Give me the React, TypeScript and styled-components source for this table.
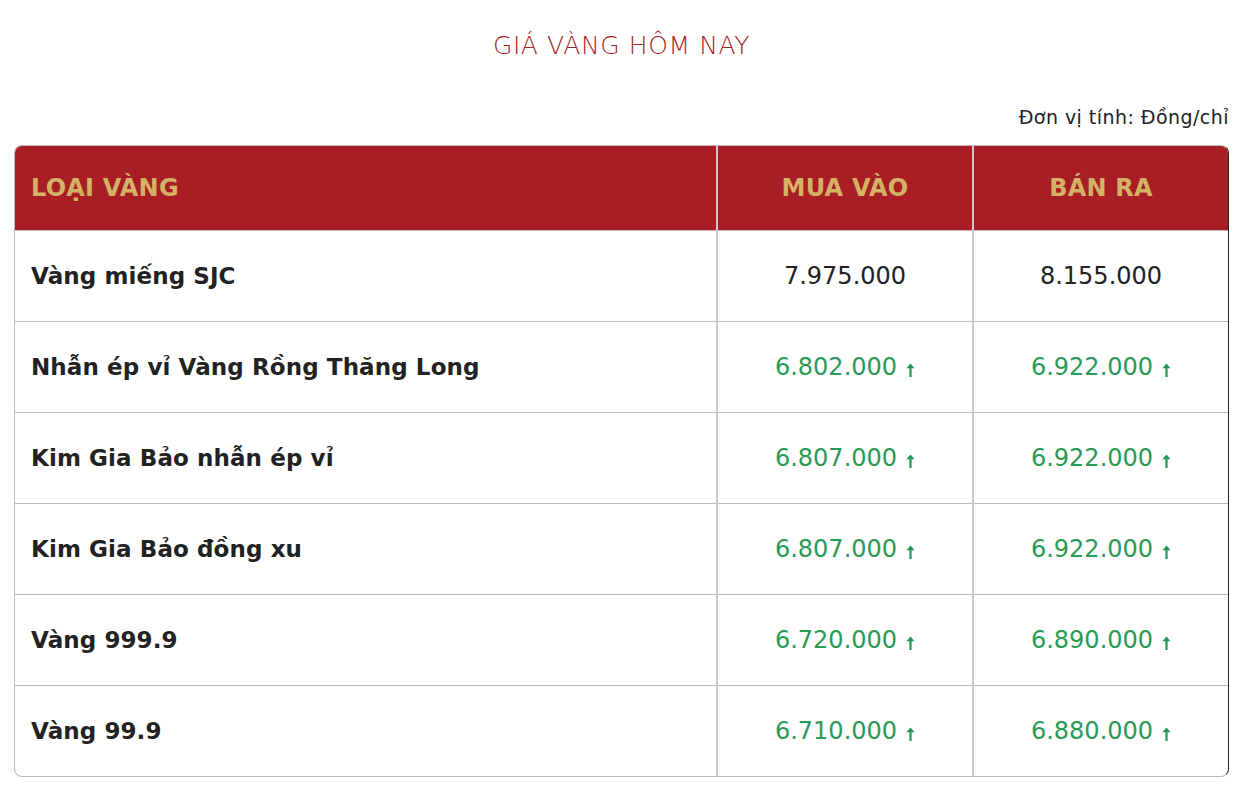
import React from "react";
import styled, { createGlobalStyle } from "styled-components";

const Global = createGlobalStyle`
  html, body { margin: 0; padding: 0; background: #fff; }
  body { font-family: "DejaVu Sans", "Noto Sans", sans-serif; color: #222; }
`;

const Page = styled.div`
  padding: 0 15px 0 14px;
`;

const Title = styled.h1`
  margin: 0;
  padding-top: 31px;
  height: 60px;
  box-sizing: border-box;
  text-align: center;
  font-family: "DejaVu Sans", sans-serif;
  font-weight: 200;
  font-size: 25px;
  letter-spacing: 0.6px;
  color: #a51f24;
  line-height: 30px;
`;

const Unit = styled.div`
  text-align: right;
  font-size: 19px;
  line-height: 24px;
  letter-spacing: 0.45px;
  margin-top: 45px;
  margin-bottom: 16px;
  color: #222;
`;

const TableWrap = styled.div`
  border: 1px solid #bbb;
  border-right-color: #222;
  border-radius: 8px;
  overflow: hidden;
`;

const Table = styled.table`
  width: 100%;
  border-collapse: collapse;
  table-layout: fixed;
`;

const Col = styled.col<{ $w?: number }>`
  width: ${(p) => (p.$w ? p.$w + "px" : "auto")};
`;

const HeadCell = styled.th<{ $align?: string }>`
  background: #a81e24;
  color: #d4b265;
  font-weight: 700;
  font-size: 24px;
  height: 84px;
  padding: 0 16px;
  text-align: ${(p) => p.$align || "center"};
  border-left: 2px solid #c8c8c8;
  border-bottom: 1px solid #bbb;
  letter-spacing: 0.2px;
  &:first-child { border-left: none; }
`;

const Row = styled.tr`
  & + & td { border-top: 1px solid #bbb; }
`;

const NameCell = styled.td`
  height: 90px;
  padding: 0 16px;
  font-weight: 700;
  font-size: 23px;
  letter-spacing: 0.1px;
  color: #222;
`;

const PriceCell = styled.td<{ $up?: boolean }>`
  height: 90px;
  padding: 0;
  text-align: center;
  font-size: 24px;
  font-weight: 400;
  color: ${(p) => (p.$up ? "#2a9a55" : "#222")};
  border-left: 2px solid #c8c8c8;
`;

const Arrow = styled.svg`
  width: 9px;
  height: 14px;
  margin-left: 9px;
  vertical-align: -2px;
`;

const UpArrow = () => (
  <Arrow viewBox="0 0 9 14">
    <path d="M4.5 0.5 L8.6 5.2 L5.6 5.2 L5.6 14 L3.4 14 L3.4 5.2 L0.4 5.2 Z" fill="#1f9a53" />
  </Arrow>
);

const rows = [
  { name: "Vàng miếng SJC", buy: "7.975.000", sell: "8.155.000", up: false },
  { name: "Nhẫn ép vỉ Vàng Rồng Thăng Long", buy: "6.802.000", sell: "6.922.000", up: true },
  { name: "Kim Gia Bảo nhẫn ép vỉ", buy: "6.807.000", sell: "6.922.000", up: true },
  { name: "Kim Gia Bảo đồng xu", buy: "6.807.000", sell: "6.922.000", up: true },
  { name: "Vàng 999.9", buy: "6.720.000", sell: "6.890.000", up: true },
  { name: "Vàng 99.9", buy: "6.710.000", sell: "6.880.000", up: true },
];

export default function App() {
  return (
    <>
      <Global />
      <Page>
        <Title>GIÁ VÀNG HÔM NAY</Title>
        <Unit>Đơn vị tính: Đồng/chỉ</Unit>
        <TableWrap>
          <Table>
            <colgroup>
              <Col />
              <Col $w={256} />
              <Col $w={255} />
            </colgroup>
            <thead>
              <tr>
                <HeadCell $align="left">LOẠI VÀNG</HeadCell>
                <HeadCell>MUA VÀO</HeadCell>
                <HeadCell>BÁN RA</HeadCell>
              </tr>
            </thead>
            <tbody>
              {rows.map((r) => (
                <Row key={r.name}>
                  <NameCell>{r.name}</NameCell>
                  <PriceCell $up={r.up}>
                    {r.buy}
                    {r.up && <UpArrow />}
                  </PriceCell>
                  <PriceCell $up={r.up}>
                    {r.sell}
                    {r.up && <UpArrow />}
                  </PriceCell>
                </Row>
              ))}
            </tbody>
          </Table>
        </TableWrap>
      </Page>
    </>
  );
}
